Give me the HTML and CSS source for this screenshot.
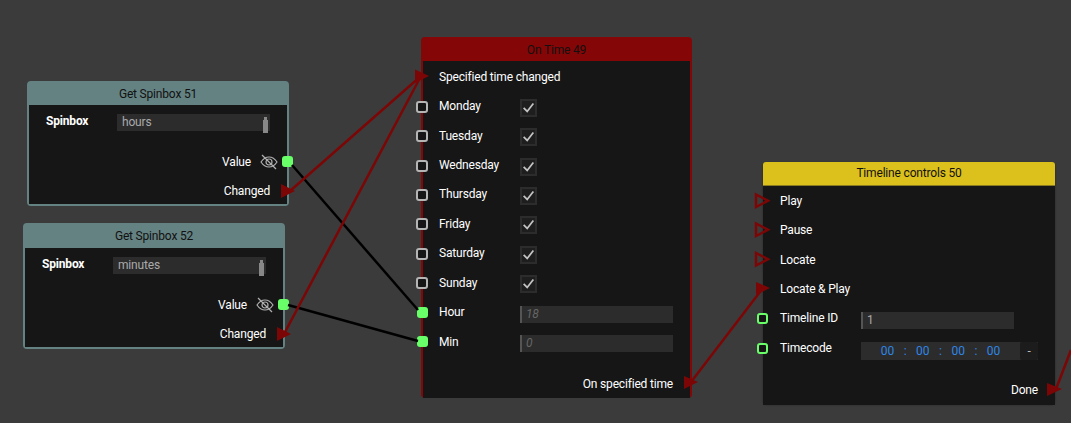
FILE: index.html
```html
<!DOCTYPE html>
<html lang="en">
<head>
  <meta charset="UTF-8">
  <title>Node editor</title>
  <link rel="stylesheet" href="styles.css">
</head>
<body>
  <div class="canvas">

    <!-- Get Spinbox 51 -->
    <div class="node spinbox-node node-51">
      <div class="node-title">Get Spinbox 51</div>
      <div class="node-body">
        <div class="spin-head">
          <span class="spin-name">Spinbox</span>
          <div class="field field-select">hours<span class="spin-arrows"></span></div>
        </div>
        <div class="out-row value-row">
          <span class="label">Value</span>
          <svg class="eye" viewBox="0 0 18 16"><path d="M1 8c2-3 5-5 8-5s6 2 8 5c-2 3-5 5-8 5S3 11 1 8z"/><circle cx="9" cy="8" r="3"/><path d="M2 1l14 14"/></svg>
          <span class="port port-data port-right"></span>
        </div>
        <div class="out-row">
          <span class="label">Changed</span>
        </div>
      </div>
    </div>

    <!-- Get Spinbox 52 -->
    <div class="node spinbox-node node-52">
      <div class="node-title">Get Spinbox 52</div>
      <div class="node-body">
        <div class="spin-head">
          <span class="spin-name">Spinbox</span>
          <div class="field field-select">minutes<span class="spin-arrows"></span></div>
        </div>
        <div class="out-row value-row">
          <span class="label">Value</span>
          <svg class="eye" viewBox="0 0 18 16"><path d="M1 8c2-3 5-5 8-5s6 2 8 5c-2 3-5 5-8 5S3 11 1 8z"/><circle cx="9" cy="8" r="3"/><path d="M2 1l14 14"/></svg>
          <span class="port port-data port-right"></span>
        </div>
        <div class="out-row">
          <span class="label">Changed</span>
        </div>
      </div>
    </div>

    <!-- On Time 49 -->
    <div class="node time-node">
      <div class="node-title">On Time 49</div>
      <div class="node-body">
        <div class="row"><span class="port port-none"></span><span class="label">Specified time changed</span></div>
        <div class="row"><span class="port port-bool"></span><span class="label col-label">Monday</span><span class="check"><svg viewBox="0 0 17 17"><path d="M3 9l4 4L14 4"/></svg></span></div>
        <div class="row"><span class="port port-bool"></span><span class="label col-label">Tuesday</span><span class="check"><svg viewBox="0 0 17 17"><path d="M3 9l4 4L14 4"/></svg></span></div>
        <div class="row"><span class="port port-bool"></span><span class="label col-label">Wednesday</span><span class="check"><svg viewBox="0 0 17 17"><path d="M3 9l4 4L14 4"/></svg></span></div>
        <div class="row"><span class="port port-bool"></span><span class="label col-label">Thursday</span><span class="check"><svg viewBox="0 0 17 17"><path d="M3 9l4 4L14 4"/></svg></span></div>
        <div class="row"><span class="port port-bool"></span><span class="label col-label">Friday</span><span class="check"><svg viewBox="0 0 17 17"><path d="M3 9l4 4L14 4"/></svg></span></div>
        <div class="row"><span class="port port-bool"></span><span class="label col-label">Saturday</span><span class="check"><svg viewBox="0 0 17 17"><path d="M3 9l4 4L14 4"/></svg></span></div>
        <div class="row"><span class="port port-bool"></span><span class="label col-label">Sunday</span><span class="check"><svg viewBox="0 0 17 17"><path d="M3 9l4 4L14 4"/></svg></span></div>
        <div class="row"><span class="port port-data"></span><span class="label col-label">Hour</span><span class="field field-input hint">18</span></div>
        <div class="row"><span class="port port-data"></span><span class="label col-label">Min</span><span class="field field-input hint">0</span></div>
        <div class="row row-end"><span class="label">On specified time</span></div>
      </div>
    </div>

    <!-- Timeline controls 50 -->
    <div class="node timeline-node">
      <div class="node-title">Timeline controls 50</div>
      <div class="node-body">
        <div class="row"><span class="port port-none"></span><span class="label">Play</span></div>
        <div class="row"><span class="port port-none"></span><span class="label">Pause</span></div>
        <div class="row"><span class="port port-none"></span><span class="label">Locate</span></div>
        <div class="row"><span class="port port-none"></span><span class="label">Locate &amp; Play</span></div>
        <div class="row"><span class="port port-ring"></span><span class="label col-label">Timeline ID</span><span class="field field-input">1</span></div>
        <div class="row"><span class="port port-ring"></span><span class="label col-label">Timecode</span>
          <div class="timecode">
            <div class="tc-digits"><span>00</span><i>:</i><span>00</span><i>:</i><span>00</span><i>:</i><span>00</span></div>
            <span class="tc-btn">-</span>
          </div>
        </div>
        <div class="row row-end"><span class="label">Done</span></div>
      </div>
    </div>

    <!-- wires and exec arrows, drawn over the nodes -->
    <svg class="wires" width="1071" height="423" viewBox="0 0 1071 423">
      <g class="wire-data">
        <path d="M292 165L418 310"/>
        <path d="M288 305L418 341"/>
      </g>
      <g class="wire-exec">
        <path d="M290 191L421 76"/>
        <path d="M284 334L421 76"/>
        <path d="M691 382L763 288"/>
        <path d="M1056 389L1071 350"/>
      </g>
      <g class="arrow-fill">
        <path d="M415 69.5V83L429 76z"/>
        <path d="M281 184V198L295 191z"/>
        <path d="M277 327V341L291 334z"/>
        <path d="M684 376V389L698 382z"/>
        <path d="M756 282V295L770 288z"/>
        <path d="M1047 383V396L1062 389z"/>
      </g>
      <g class="arrow-open">
        <path d="M756 194.5V207L768 200.7z"/>
        <path d="M756 223.5V236L768 229.7z"/>
        <path d="M756 253V265.5L768 259.2z"/>
      </g>
    </svg>
  </div>
</body>
</html>
```

FILE: styles.css
```css
body {
  margin: 0;
  background-color: #3b3b3b;
  font-family: Roboto, sans-serif;
  font-size: 12px;
  letter-spacing: -0.18px;
  color: #fff;
  overflow: hidden;
}
.canvas {
  position: relative;
  width: 1071px;
  height: 423px;
}

/* nodes */
.node {
  position: absolute;
  box-sizing: border-box;
  display: flex;
  flex-direction: column;
  border: 2px solid;
  border-radius: 4px;
}
.node-title {
  height: 22px;
  line-height: 22px;
  text-align: center;
  color: #111;
  flex: none;
}
.node-body {
  flex: 1;
  background-color: #161616;
  display: flex;
  flex-direction: column;
}
.spinbox-node {
  width: 262px;
  border-color: #648282;
}
.spinbox-node .node-title {
  background-color: #648282;
}
.node-51 {
  left: 27px;
  top: 81px;
  height: 125px;
}
.node-52 {
  left: 23px;
  top: 223px;
  height: 126px;
}
.node-52 .node-title {
  height: 23px;
  line-height: 23px;
}
.time-node {
  left: 421px;
  top: 37px;
  width: 271px;
  height: 361px;
  border-color: #850606;
}
.time-node .node-title {
  background-color: #850606;
}
.timeline-node {
  left: 763px;
  top: 162px;
  width: 292px;
  height: 242px;
  border: none;
  box-shadow: 0 1px 2px rgba(0, 0, 0, 0.4);
}
.timeline-node .node-title {
  height: 23px;
  line-height: 23px;
  background-color: #dcc01c;
  border-radius: 3px 3px 0 0;
  border-bottom: 1px solid #8a7a20;
}

/* spinbox node contents */
.spin-head {
  display: flex;
  height: 42px;
  padding-top: 9px;
  box-sizing: border-box;
  flex: none;
}
.spin-name {
  width: 88px;
  padding-left: 17px;
  box-sizing: border-box;
  line-height: 14px;
  font-weight: 700;
  flex: none;
}
.out-row {
  display: flex;
  align-items: center;
  justify-content: flex-end;
  height: 29px;
  padding-right: 17px;
  flex: none;
}
.out-row .label {
  margin-top: 1px;
}
.out-row:last-child {
  height: 28px;
}
.node-52 .out-row:last-child .label {
  margin-top: 2px;
}
.value-row {
  padding-right: 0;
}
.eye {
  width: 18px;
  height: 16px;
  margin: 0 4px 0 9px;
  fill: none;
  stroke: #b0b0b0;
  stroke-width: 1.2;
}

/* rows */
.row {
  display: flex;
  align-items: center;
  height: 29.44px;
  flex: none;
}
.time-node .node-body {
  padding-top: 1px;
}
.row-end {
  justify-content: flex-end;
  margin-top: 12.5px;
  padding-right: 17px;
}
.col-label {
  width: 81px;
  flex: none;
}

/* ports */
.port {
  flex: none;
  box-sizing: border-box;
  width: 11px;
  height: 11px;
  margin: 0 11px 0 -6px;
  border-radius: 3px;
}
.port-none {
  background: none;
}
.port-bool {
  width: 12px;
  height: 12px;
  margin: 1px 11px 0 -7px;
  border: 2.5px solid #b5b5b5;
  background-color: #161616;
}
.port-data {
  background-color: #69ff69;
}
.port-ring {
  border: 2px solid #69ff69;
  background-color: #161616;
  margin-top: 1px;
}
.port-right {
  margin: 0 -6px 0 0;
}
.timeline-node .port {
  margin-right: 12px;
}

/* inputs */
.field {
  box-sizing: border-box;
  display: block;
  width: 153px;
  height: 17px;
  line-height: 17px;
  background-color: #2c2c2c;
  color: #aaa;
}
.row .field {
  margin-top: 4px;
}
.timeline-node .row .field {
  margin-top: 5px;
}
.field-select {
  position: relative;
  padding-left: 5px;
}
.spin-arrows {
  position: absolute;
  right: 3px;
  top: 3px;
  width: 3px;
  height: 11px;
  background-color: #888;
  box-shadow: 0 4px 0 1px #888;
}
.field-input {
  border-left: 2px solid #555;
  padding-left: 4px;
}
.hint {
  color: #666;
  font-style: italic;
}
.check {
  box-sizing: border-box;
  width: 17px;
  height: 18px;
  margin-top: 3px;
  background-color: #1e1e1e;
  border: 2px solid #2c2c2c;
}
.check svg {
  display: block;
  width: 15px;
  height: 15px;
  margin: -1px;
  fill: none;
  stroke: #c4c4c4;
  stroke-width: 2;
}
.timecode {
  display: flex;
  width: 177px;
  height: 18px;
  margin-top: 6px;
  background-color: #2c2c2c;
  align-items: center;
}
.tc-digits {
  flex: 1;
  display: flex;
  justify-content: center;
  gap: 9.5px;
  color: #2e86e6;
  letter-spacing: 0;
}
.tc-digits i {
  font-style: normal;
}
.tc-btn {
  width: 18px;
  height: 18px;
  line-height: 18px;
  text-align: center;
  background-color: #1c1c1c;
  color: #bbb;
  border-radius: 2px;
}

/* wires */
.wires {
  position: absolute;
  left: 0;
  top: 0;
}
.wire-data path {
  fill: none;
  stroke: #000;
  stroke-width: 2.5;
}
.wire-exec path {
  fill: none;
  stroke: #7c0606;
  stroke-width: 2.5;
}
.arrow-fill path {
  fill: #7c0606;
}
.arrow-open path {
  fill: none;
  stroke: #7c0606;
  stroke-width: 2.5;
}
```
